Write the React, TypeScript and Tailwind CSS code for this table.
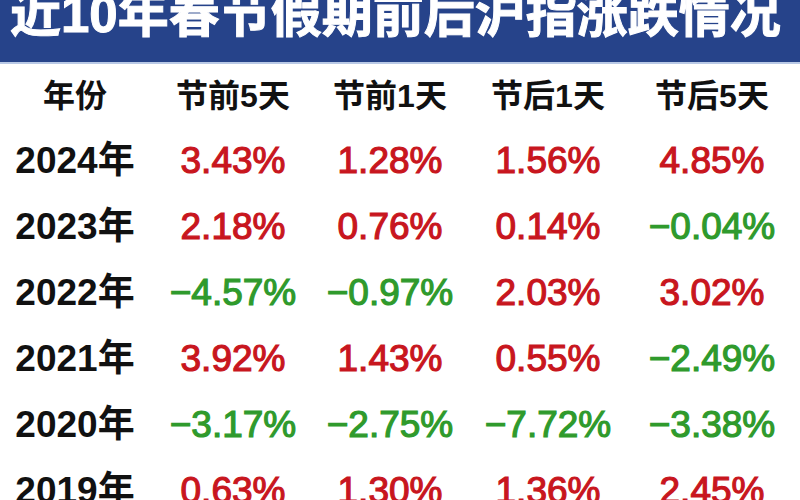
const rows = [
  { year: "2024年", vals: ["3.43%", "1.28%", "1.56%", "4.85%"] },
  { year: "2023年", vals: ["2.18%", "0.76%", "0.14%", "−0.04%"] },
  { year: "2022年", vals: ["−4.57%", "−0.97%", "2.03%", "3.02%"] },
  { year: "2021年", vals: ["3.92%", "1.43%", "0.55%", "−2.49%"] },
  { year: "2020年", vals: ["−3.17%", "−2.75%", "−7.72%", "−3.38%"] },
  { year: "2019年", vals: ["0.63%", "1.30%", "1.36%", "2.45%"] },
];

const heads = ["年份", "节前5天", "节前1天", "节后1天", "节后5天"];

export default function App() {
  return (
    <div
      className="w-[800px] h-[500px] overflow-hidden bg-white"
      style={{ fontFamily: '"Liberation Sans", "Noto Sans CJK SC", sans-serif' }}
    >
      {/* title bar */}
      <div className="h-[62px] bg-[#26438a] overflow-hidden flex items-end pl-[10px]">
        <h1 className="text-white font-bold text-[51px] leading-none mb-[22px] whitespace-nowrap [-webkit-text-stroke:1px_white]">
          近10年春节假期前后沪指涨跌情况
        </h1>
      </div>
      <div className="h-[2px] bg-[#b9c9e6]" />

      <div className="grid grid-cols-[150px_166px_148px_168px_160px]">
        {heads.map((h) => (
          <div key={h} className="h-[64px] flex items-center justify-center text-[32px] font-bold text-[#111]">
            {h}
          </div>
        ))}
        {rows.map((r) => (
          <>
            <div key={r.year} className="h-[66px] flex items-center justify-center text-[37px] font-bold text-[#111]">
              {r.year}
            </div>
            {r.vals.map((v, i) => (
              <div
                key={r.year + i}
                className={
                  "h-[66px] flex items-center justify-center text-[37px] [-webkit-text-stroke:1.2px_currentColor] " +
                  (v.startsWith("−") ? "text-[#2f9a2c]" : "text-[#c8161e]")
                }
              >
                {v}
              </div>
            ))}
          </>
        ))}
      </div>
    </div>
  );
}
